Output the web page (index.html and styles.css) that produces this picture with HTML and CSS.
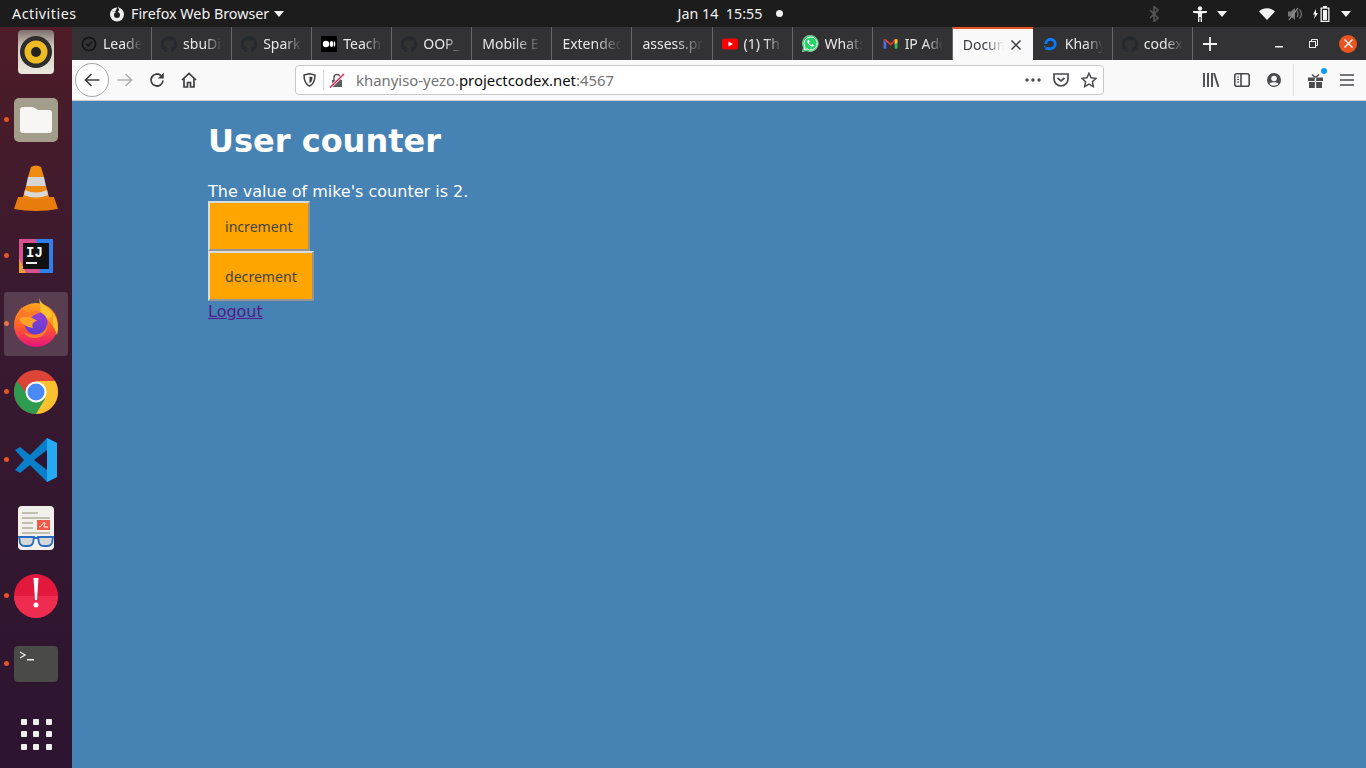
FILE: index.html
```html
<!DOCTYPE html>
<html lang="en">
<head>
    <meta charset="UTF-8">
    <title>User counter</title>
    <link rel="stylesheet" href="styles.css">
</head>
<body>
    <svg class="defs" width="0" height="0">
        <symbol id="github" viewBox="0 0 24 24"><path d="M12 .5C5.37.5 0 5.87 0 12.5c0 5.3 3.44 9.8 8.2 11.39.6.11.82-.26.82-.58v-2.03c-3.34.73-4.04-1.61-4.04-1.61-.55-1.39-1.33-1.76-1.33-1.76-1.09-.74.08-.73.08-.73 1.2.08 1.84 1.24 1.84 1.24 1.07 1.83 2.81 1.3 3.5 1 .11-.78.42-1.3.76-1.6-2.67-.3-5.47-1.33-5.47-5.93 0-1.31.47-2.38 1.24-3.22-.13-.3-.54-1.52.12-3.18 0 0 1-.32 3.3 1.23a11.5 11.5 0 016 0c2.3-1.55 3.3-1.23 3.3-1.23.66 1.66.25 2.88.12 3.18.77.84 1.24 1.91 1.24 3.22 0 4.61-2.8 5.63-5.48 5.92.43.37.81 1.1.81 2.22v3.29c0 .32.22.7.83.58A12 12 0 0024 12.5C24 5.87 18.63.5 12 .5z" fill="#24292e"/></symbol>
        <symbol id="caret" viewBox="0 0 10 6"><path d="M0 0h10L5 6z" fill="#f2f2f2"/></symbol>
    </svg>

    <!-- Ubuntu top bar -->
    <div class="topbar">
        <div class="top-left">
            <span class="activities">Activities</span>
            <span class="app-menu">
                <svg width="16" height="16" viewBox="0 0 16 16"><circle cx="8" cy="8.500" r="7" fill="#eee"/><circle cx="8" cy="9" r="3" fill="#1d1d1d"/><path d="M1 4l5 2 3-6 2 2-2 4H5z" fill="#1d1d1d"/><path d="M9 0c1 2 3 2 5 5l-4-1z" fill="#eee"/></svg>
                <span>Firefox Web Browser</span>
                <svg class="caret" width="10" height="6"><use href="#caret"/></svg>
            </span>
        </div>
        <div class="clock">
            <span>Jan 14&nbsp; 15:55</span>
            <span class="clock-dot"></span>
        </div>
        <div class="tray">
            <svg class="tray-bt" width="10" height="16" viewBox="0 0 10 16"><path d="M1 4l8 8-4 3.500V.5l4 3.500-8 8" fill="none" stroke="#555" stroke-width="1.600"/></svg>
            <svg class="tray-person" width="14" height="16" viewBox="0 0 14 16"><circle cx="7" cy="2.500" r="2.200" fill="#f2f2f2"/><path d="M0 5h14v1.800L9 7.500V16H7.600v-5H6.400v5H5V7.500L0 6.800z" fill="#f2f2f2"/></svg>
            <svg class="tray-caret" width="10" height="6"><use href="#caret"/></svg>
            <svg class="tray-wifi" width="16" height="12" viewBox="0 0 16 12"><path d="M0 3.500C4-.8 12-.8 16 3.500L8 12z" fill="#f2f2f2"/></svg>
            <svg class="tray-vol" width="16" height="14" viewBox="0 0 16 14"><path d="M0 4.500h3L7 1v12L3 9.500H0z" fill="#777"/><path d="M9 4c1.500 1.500 1.500 4.500 0 6M11.500 2.500c2.500 2.500 2.500 6.500 0 9" fill="none" stroke="#777" stroke-width="1.200"/><path d="M1 13L10 1" stroke="#999" stroke-width="1.200"/></svg>
            <svg class="tray-batt" width="18" height="16" viewBox="0 0 18 16"><path d="M3 3L0 8.500h2L1 13l4-6H3z" fill="#f2f2f2"/><path d="M10 0h4v1.500h2.500V16h-9V1.500H10z" fill="#f2f2f2"/><rect x="8.800" y="2.700" width="6.400" height="12" fill="#1d1d1d"/><rect x="10" y="4" width="4" height="10" fill="#f2f2f2"/></svg>
            <svg class="tray-caret" width="10" height="6"><use href="#caret"/></svg>
        </div>
    </div>

    <div class="desktop">
        <!-- Dock -->
        <nav class="dock">
            <div class="dock-item">
                <svg width="64" height="64" viewBox="0 0 64 64">
                    <defs>
                        <linearGradient id="rb" x1="0" y1="0" x2="0" y2="1"><stop offset="0" stop-color="#7d6f6c"/><stop offset=".4" stop-color="#d6d1c5"/><stop offset="1" stop-color="#ebe8dd"/></linearGradient>
                    </defs>
                    <rect x="14" y="10" width="36" height="44" rx="4" fill="url(#rb)"/>
                    <circle cx="32" cy="32" r="16" fill="#2f2c2e"/>
                    <circle cx="32" cy="32" r="11.500" fill="#edbb22"/>
                    <circle cx="32" cy="32" r="5" fill="#222"/>
                </svg>
            </div>
            <div class="dock-item running">
                <svg width="64" height="64" viewBox="0 0 64 64">
                    <rect x="10" y="10" width="44" height="44" rx="5" fill="#a39d8b"/>
                    <path d="M16 22q0-3 3-3h10l5 3h11q3 0 3 3v17q0 3-3 3H19q-3 0-3-3z" fill="#f7f6f4"/>
                </svg>
            </div>
            <div class="dock-item">
                <svg width="64" height="64" viewBox="0 0 64 64">
                    <path d="M14 41h36l4 12q-22 4-44 0z" fill="#e87d0d"/>
                    <path d="M27 11q5-3 10 0l3 10H24z" fill="#f08b12"/>
                    <path d="M24 21h16l2 9H22z" fill="#d5d5d5"/>
                    <path d="M22 30h20l3 11q-13 5-26 0z" fill="#f08b12"/>
                    <path d="M21 34q11 5 22 0l1 5q-12 5-24 0z" fill="#d8d8d8"/>
                </svg>
            </div>
            <div class="dock-item running">
                <svg width="64" height="64" viewBox="0 0 64 64">
                    <path d="M15 15h34v34H15z" fill="#d9508f"/>
                    <path d="M32 15h17v34H36z" fill="#2f80ed"/>
                    <path d="M15 34l7 15H15z" fill="#f09a3e"/>
                    <rect x="19" y="19" width="26" height="26" fill="#111"/>
                    <text class="ij-text" x="22" y="33">IJ</text>
                    <rect x="22" y="38" width="11" height="2" fill="#eee"/>
                </svg>
            </div>
            <div class="dock-item running active">
                <svg width="64" height="64" viewBox="0 0 64 64">
                    <defs>
                        <linearGradient id="fx" x1="0" y1="0" x2="0" y2="1"><stop offset="0" stop-color="#ffa51f"/><stop offset=".55" stop-color="#ff5a2a"/><stop offset="1" stop-color="#e5127f"/></linearGradient>
                        <linearGradient id="fxglobe" x1="0" y1="0" x2="0" y2="1"><stop offset="0" stop-color="#9a3fd0"/><stop offset="1" stop-color="#5b3bd6"/></linearGradient>
                    </defs>
                    <circle cx="32" cy="33" r="22" fill="url(#fx)"/>
                    <path d="M35 6c2 7 9 8 14 15 5 6 6 15 4 22-3-10-9-17-17-21 1-5 0-10-1-16z" fill="#ffc22a"/>
                    <path d="M49 21c-2 5-3 6-6 5l6 8z" fill="#ff9a24"/>
                    <circle cx="32" cy="31" r="11.500" fill="url(#fxglobe)"/>
                    <path d="M18 15c1 4 4 6 8 5 3-1 8-1 11 1-4 0-8 2-10 5l-6 2-8-2c0-4 2-8 5-11z" fill="#ff7a24"/>
                    <path d="M15 27c5-3 13-3 18 2-3 0-6 3-4 7-6-1-12-4-14-9z" fill="#ffa328"/>
                    <path d="M43 31c2 8-4 15-12 15-5 0-9-2-11-6 5 3 12 4 17 1 4-2 6-6 6-10z" fill="#ff7d2a"/>
                </svg>
            </div>
            <div class="dock-item running">
                <svg width="64" height="64" viewBox="0 0 64 64">
                    <circle cx="32" cy="32" r="22" fill="#db4437"/>
                    <path d="M32 54A22 22 0 0 0 51 21H32z" fill="#fbc02d"/>
                    <path d="M13 21A22 22 0 0 0 32 54l9-15-9-7-9 2z" fill="#2e9b4f"/>
                    <circle cx="32" cy="32" r="10.500" fill="#fff"/>
                    <circle cx="32" cy="32" r="8.500" fill="#4a8af4"/>
                </svg>
            </div>
            <div class="dock-item running">
                <svg width="64" height="64" viewBox="0 0 64 64">
                    <path d="M43 10l10 5v34l-10 5-17-17-10 8-5-3 9-10-9-10 5-3 10 8z" fill="#0a7fc9"/>
                    <path d="M43 10l10 5v34l-10 5z" fill="#25a9f2"/>
                    <path d="M43 22L30 32l13 10z" fill="#2d1531"/>
                </svg>
            </div>
            <div class="dock-item">
                <svg width="64" height="64" viewBox="0 0 64 64">
                    <rect x="14" y="10" width="36" height="44" rx="4" fill="#f2f0ea"/>
                    <path d="M18 17h16M18 22h28M18 27h11M18 32h11M18 37h28" stroke="#b3ae9f" stroke-width="1.500"/>
                    <rect x="33" y="24" width="13" height="10" fill="#ee5a4a"/>
                    <path d="M35 31c3 0 3-5 6-4 1 1-3 4 0 4h3" fill="none" stroke="#fff"/>
                    <path d="M15 41h15l-1 6q-1 3-5 3h-3q-4 0-5-3zM34 41h15l-1 6q-1 3-5 3h-3q-4 0-5-3z" fill="#d6d9d8" stroke="#2a6dbe" stroke-width="1.800"/>
                    <path d="M29 42h6" stroke="#2a6dbe" stroke-width="2"/>
                </svg>
            </div>
            <div class="dock-item running">
                <svg width="64" height="64" viewBox="0 0 64 64">
                    <circle cx="32" cy="32" r="22" fill="#e2183c"/>
                    <path d="M10 32a22 22 0 0 0 44 0z" fill="#ee2c50"/>
                    <path d="M29.500 14h5l-1.500 22h-2z" fill="#fff"/>
                    <circle cx="32" cy="41" r="2.500" fill="#fff"/>
                </svg>
            </div>
            <div class="dock-item running">
                <svg width="64" height="64" viewBox="0 0 64 64">
                    <rect x="10" y="14" width="44" height="36" rx="4" fill="#4a4a48"/>
                    <path d="M16 20l5 3-5 3" fill="none" stroke="#eee" stroke-width="1.300"/>
                    <rect x="23" y="27" width="7" height="1.500" fill="#eee"/>
                </svg>
            </div>
            <div class="dock-item">
                <div class="app-grid">
                    <i></i><i></i><i></i><i></i><i></i><i></i><i></i><i></i><i></i>
                </div>
            </div>
        </nav>

        <div class="window">
            <!-- Tabs -->
            <div class="tabbar">
                <div class="tab">
                    <svg width="16" height="16" viewBox="0 0 17 17"><circle cx="8.500" cy="8.500" r="7" fill="none" stroke="#111" stroke-width="1.600"/><path d="M5.500 8.500l2.500 2 3.500-4.500" fill="none" stroke="#111" stroke-width="1.400"/></svg>
                    <span class="tab-label">Leade</span>
                </div>
                <div class="tab"><svg width="16" height="16"><use href="#github"/></svg><span class="tab-label">sbuDi</span></div>
                <div class="tab"><svg width="16" height="16"><use href="#github"/></svg><span class="tab-label">Spark</span></div>
                <div class="tab">
                    <svg width="16" height="16" viewBox="0 0 16 16"><rect width="16" height="16" fill="#000"/><circle cx="5" cy="8" r="3.200" fill="#fff"/><ellipse cx="10.500" cy="8" rx="1.700" ry="3" fill="#fff"/><ellipse cx="13.500" cy="8" rx=".8" ry="2.700" fill="#fff"/></svg>
                    <span class="tab-label">Teach</span>
                </div>
                <div class="tab"><svg width="16" height="16"><use href="#github"/></svg><span class="tab-label">OOP_</span></div>
                <div class="tab"><span class="tab-label">Mobile E</span></div>
                <div class="tab"><span class="tab-label">Extended</span></div>
                <div class="tab"><span class="tab-label">assess.pr</span></div>
                <div class="tab">
                    <svg width="16" height="16" viewBox="0 0 16 16"><rect y="2.500" width="16" height="11" rx="3" fill="#f00"/><path d="M6.500 5.500L11 8l-4.500 2.500z" fill="#fff"/></svg>
                    <span class="tab-label">(1) Th</span>
                </div>
                <div class="tab">
                    <svg width="17" height="17" viewBox="0 0 17 17"><path d="M8.500.2a8.200 8.200 0 0 0-7 12.500L.2 16.800l4.200-1.100A8.200 8.200 0 1 0 8.500.2z" fill="#25d366" stroke="#fff" stroke-width=".4"/><path d="M8.500 2a6.500 6.500 0 0 0-5.500 10l-.7 2.500 2.600-.7A6.500 6.500 0 1 0 8.500 2z" fill="none" stroke="#fff" stroke-width="1"/><path d="M6 5c-1 1-.8 2.300.3 3.800s2.800 2.800 4 2.700c1 0 1.700-.8 1.500-1.500l-1.700-.9-.8.800c-1-.4-2-1.500-2.300-2.400l.7-.8L7 5z" fill="#fff"/></svg>
                    <span class="tab-label">Whats</span>
                </div>
                <div class="tab">
                    <svg width="17" height="16" viewBox="0 0 15 15"><path d="M1 3v9h2.500V6z" fill="#4a6fe0"/><path d="M14 3v9h-2.500V6z" fill="#3cb55c"/><path d="M1 3l2.500 0L7.500 7l4-4H14l-6.500 6z" fill="#e8402f"/><path d="M11.500 3H14v3l-2.500 2z" fill="#f7c52c"/></svg>
                    <span class="tab-label">IP Adc</span>
                </div>
                <div class="tab tab-active">
                    <span class="tab-label">Docum</span>
                    <svg class="tab-close" width="12" height="12" viewBox="0 0 12 12"><path d="M1.500 1.500l9 9M10.500 1.500l-9 9" stroke="#3b3b3f" stroke-width="1.500"/></svg>
                </div>
                <div class="tab">
                    <svg width="17" height="18" viewBox="0 0 18 18"><path d="M9 15.500V12.500A3.500 3.500 0 1 0 5.500 9H2.500A6.500 6.500 0 1 1 9 15.500z" fill="#0a7cff"/><path d="M6 12.500h3v3H6zM3.500 12.500H6V15H3.500zM2 11h1.500v1.500H2z" fill="#0a7cff"/></svg>
                    <span class="tab-label">Khany</span>
                </div>
                <div class="tab"><svg width="16" height="16"><use href="#github"/></svg><span class="tab-label">codex</span></div>
                <div class="tab-new">
                    <svg width="14" height="14" viewBox="0 0 14 14"><path d="M7 0v14M0 7h14" stroke="#f2f2f2" stroke-width="1.800"/></svg>
                </div>
                <div class="window-controls">
                    <svg class="win-min" width="8" height="2"><rect width="8" height="1.500" fill="#eee"/></svg>
                    <svg class="win-max" width="9" height="9" viewBox="0 0 9 9"><path d="M2.500 2.500V.5h6v6h-2" fill="none" stroke="#eee"/><rect x=".5" y="2.500" width="6" height="6" fill="none" stroke="#eee"/></svg>
                    <span class="win-close">
                        <svg width="9" height="9" viewBox="0 0 9 9"><path d="M.5.500l8 8M8.500.500l-8 8" stroke="#fff" stroke-width="1.300"/></svg>
                    </span>
                </div>
            </div>

            <!-- Toolbar -->
            <div class="toolbar">
                <div class="nav-buttons">
                    <span class="back-btn">
                        <svg width="16" height="14" viewBox="0 0 16 14"><path d="M15.500 7H1.500M7.500 1l-6 6 6 6" fill="none" stroke="#3f3f41" stroke-width="1.700"/></svg>
                    </span>
                    <svg class="forward" width="16" height="14" viewBox="0 0 16 14"><path d="M.5 7h14M8.500 1l6 6-6 6" fill="none" stroke="#b1b1b3" stroke-width="1.700"/></svg>
                    <svg class="reload" width="16" height="16" viewBox="0 0 16 16"><path d="M14 8.500A6 6 0 1 1 12 3.500" fill="none" stroke="#3f3f41" stroke-width="1.800"/><path d="M14.800.5v6h-6z" fill="#3f3f41"/></svg>
                    <svg class="home" width="16" height="16" viewBox="0 0 16 16"><path d="M1 8l7-6.500L15 8M3 6.500V15h3.500v-4.500h3V15H13V6.500" fill="none" stroke="#3f3f41" stroke-width="1.700"/></svg>
                </div>
                <div class="urlbar">
                    <svg class="url-shield" width="13" height="14" viewBox="0 0 13 14"><path d="M1 2l5.500-1.200L12 2c0 5-1 9-5.500 11.200C2 11 1 7 1 2z" fill="none" stroke="#3f3f41" stroke-width="1.500"/><path d="M6.500 3.500L9.500 4c0 3-.7 5-3 6.500z" fill="#3f3f41"/></svg>
                    <span class="url-sep"></span>
                    <svg class="url-lock" width="16" height="15" viewBox="0 0 16 15"><path d="M3 7h10v7H3z" fill="#5c5c5f"/><path d="M5 7V4.500a3 3 0 0 1 6 0V7" fill="none" stroke="#5c5c5f" stroke-width="1.500"/><path d="M1 14.500L15 1" stroke="#f9f9fa" stroke-width="3"/><path d="M1 14.500L15 1" stroke="#e22850" stroke-width="1.500"/></svg>
                    <span class="url-text">khanyiso-yezo.<b>projectcodex.net</b>:4567</span>
                    <svg class="url-dots" width="16" height="4" viewBox="0 0 16 4"><circle cx="2" cy="2" r="1.700" fill="#4a4a4f"/><circle cx="8" cy="2" r="1.700" fill="#4a4a4f"/><circle cx="14" cy="2" r="1.700" fill="#4a4a4f"/></svg>
                    <svg class="url-pocket" width="16" height="14" viewBox="0 0 16 14"><path d="M1 1h14v5a7 7 0 0 1-14 0z" fill="none" stroke="#4a4a4f" stroke-width="1.700"/><path d="M4.500 5l3.500 3 3.500-3" fill="none" stroke="#4a4a4f" stroke-width="1.700"/></svg>
                    <svg class="url-star" width="16" height="16" viewBox="0 0 16 16"><path d="M8 1.200l2.100 4.500 4.900.6-3.600 3.400.9 4.900L8 12.200l-4.300 2.400.9-4.900L1 6.300l4.900-.6z" fill="none" stroke="#4a4a4f" stroke-width="1.500"/></svg>
                </div>
                <div class="tools">
                    <svg width="16" height="14" viewBox="0 0 16 14"><path d="M1 0v14M5 0v14M9 0v14M11 0l4.500 14" stroke="#4a4a4f" stroke-width="1.900" fill="none"/></svg>
                    <svg class="tool-sidebar" width="16" height="14" viewBox="0 0 16 14"><rect x=".8" y=".8" width="14.400" height="12.400" rx="2" fill="none" stroke="#4a4a4f" stroke-width="1.600"/><path d="M7 1v12" stroke="#4a4a4f" stroke-width="1.600"/><path d="M3 4h2M3 6.500h2M3 9h2" stroke="#4a4a4f"/></svg>
                    <svg width="14" height="14" viewBox="0 0 14 14"><circle cx="7" cy="7" r="7" fill="#4a4a4f"/><circle cx="7" cy="5.500" r="2.800" fill="#f9f9fa"/><path d="M2.500 11c1-2.500 8-2.500 9 0-2 2.200-7 2.200-9 0z" fill="#f9f9fa"/></svg>
                    <span class="tools-sep"></span>
                    <span class="gift">
                        <svg width="15" height="15" viewBox="0 0 15 15"><path d="M0 4.500h6.800V8H0zM8.200 4.500H15V8H8.200zM1 9h5.800v6H1zM8.200 9H14v6H8.200z" fill="#4a4a4f"/><path d="M7.500 4.500L4 1.500M7.500 4.500l3.500-3" stroke="#4a4a4f" stroke-width="1.500"/></svg>
                        <span class="gift-badge"></span>
                    </span>
                    <svg width="14" height="12" viewBox="0 0 14 12"><path d="M0 1h14M0 6h14M0 11h14" stroke="#4a4a4f" stroke-width="1.700"/></svg>
                </div>
            </div>

            <!-- Page -->
            <main class="page">
                <h1>User counter</h1>
                <p class="counter-text">The value of mike's counter is 2.</p>
                <button class="counter-btn">increment</button>
                <button class="counter-btn">decrement</button>
                <a class="logout" href="#">Logout</a>
            </main>
        </div>
    </div>
</body>
</html>
```

FILE: styles.css
```css
* {
    box-sizing: border-box;
}
html, body {
    height: 100%;
}
body {
    margin: 0;
    overflow: hidden;
    display: flex;
    flex-direction: column;
    font-family: "Noto Sans", sans-serif;
    background-color: #4682b4;
}
svg {
    display: block;
    flex: none;
}
.defs {
    position: absolute;
}

/* top bar */
.topbar {
    height: 27px;
    flex: none;
    display: grid;
    grid-template-columns: 1fr auto 1fr;
    align-items: center;
    background-color: #1c1c1c;
    color: #f2f2f2;
    font-size: 14.3px;
}
.top-left {
    display: flex;
    align-items: center;
    padding-left: 12px;
}
.activities {
    width: 97px;
    letter-spacing: 0.5px;
}
.app-menu {
    display: flex;
    align-items: center;
    gap: 6px;
}
.app-menu .caret {
    margin-left: -1px;
}
.clock {
    display: flex;
    align-items: center;
    gap: 14px;
    margin-left: 95px;
}
.clock-dot {
    width: 7px;
    height: 7px;
    border-radius: 50%;
    background-color: #f2f2f2;
}
.tray {
    display: flex;
    align-items: center;
    justify-content: flex-end;
    padding-right: 15px;
}
.tray-bt {
    margin-right: 34px;
}
.tray-person {
    margin-right: 1px;
}
.tray-caret {
    margin-left: 9px;
}
.tray-wifi {
    margin-left: 32px;
}
.tray-vol {
    margin-left: 13px;
}
.tray-batt {
    margin-left: 9px;
}
.tray-batt + .tray-caret {
    margin-left: 10px;
}

.desktop {
    flex: 1;
    display: flex;
    min-height: 0;
}

/* dock */
.dock {
    width: 72px;
    flex: none;
    overflow: hidden;
    background: linear-gradient(180deg, #4e1c27 0%, #3a1a2f 35%, #2c1430 100%);
}
.dock-item {
    position: relative;
    height: 68px;
    display: flex;
    align-items: center;
    justify-content: center;
}
.dock-item:first-child {
    margin-top: -9px;
}
.dock-item svg {
    position: relative;
    z-index: 1;
}
.running::before {
    content: "";
    position: absolute;
    left: 4px;
    top: 31px;
    width: 5px;
    height: 5px;
    border-radius: 50%;
    background-color: #e95420;
}
.active::after {
    content: "";
    position: absolute;
    left: 4px;
    top: 2px;
    width: 64px;
    height: 64px;
    border-radius: 3px;
    background-color: rgba(255, 255, 255, 0.16);
}
.ij-text {
    font-family: "Liberation Mono", monospace;
    font-size: 14px;
    font-weight: bold;
    fill: #fff;
}
.app-grid {
    display: grid;
    grid-template-columns: repeat(3, 6px);
    gap: 6.500px;
    margin-top: 4px;
}
.app-grid i {
    height: 6px;
    border-radius: 1px;
    background-color: #eeeeec;
}

/* browser */
.window {
    flex: 1;
    min-width: 0;
    display: flex;
    flex-direction: column;
}
.tabbar {
    height: 33px;
    flex: none;
    display: flex;
    background-color: #323234;
    color: #e8e8e8;
    font-size: 14px;
}
.tab {
    width: 80.07px;
    flex: none;
    display: flex;
    align-items: center;
    gap: 6px;
    padding: 0 9px;
    border-right: 1px solid #67676a;
}
.tab-label {
    flex: 1;
    min-width: 0;
    overflow: hidden;
    white-space: nowrap;
    -webkit-mask-image: linear-gradient(90deg, #000 55%, transparent 100%);
    mask-image: linear-gradient(90deg, #000 55%, transparent 100%);
}
.tab > .tab-label:first-child {
    margin-left: 1px;
}
.tab-active {
    background-color: #f9f9fa;
    color: #3b3b3f;
    border-top: 2px solid #e95420;
    border-right: none;
}
.tab-close {
    margin-right: 2px;
}
.tab-new {
    width: 34px;
    display: flex;
    align-items: center;
    justify-content: center;
}
.window-controls {
    flex: 1;
    display: flex;
    align-items: center;
    justify-content: flex-end;
    padding-right: 9px;
}
.win-min {
    margin-top: 6px;
}
.win-max {
    margin-left: 26px;
}
.win-close {
    width: 18px;
    height: 18px;
    margin-left: 21px;
    display: flex;
    align-items: center;
    justify-content: center;
    border-radius: 50%;
    background-color: #e95420;
}
.toolbar {
    height: 41px;
    flex: none;
    display: flex;
    align-items: center;
    padding-left: 3px;
    background-color: #f9f9fa;
    border-bottom: 1px solid #cfcfd0;
}
.nav-buttons {
    width: 220px;
    flex: none;
    display: flex;
    align-items: center;
}
.back-btn {
    width: 34px;
    height: 34px;
    display: flex;
    align-items: center;
    justify-content: center;
    border: 1px solid #a5a5a7;
    border-radius: 50%;
    background-color: #fff;
}
.forward {
    margin-left: 8px;
}
.reload {
    margin-left: 16px;
}
.home {
    margin-left: 16px;
}
.urlbar {
    width: 809px;
    height: 30px;
    flex: none;
    display: flex;
    align-items: center;
    padding: 0 6px 0 7px;
    background-color: #fff;
    border: 1px solid #c8c8ca;
    border-radius: 4px;
    font-size: 14.900px;
    color: #737373;
}
.url-sep {
    width: 1px;
    height: 20px;
    margin-left: 7px;
    background-color: #d7d7db;
}
.url-lock {
    margin-left: 5px;
}
.url-text {
    flex: 1;
    margin-left: 11px;
}
.url-text b {
    font-weight: normal;
    color: #0c0c0d;
}
.url-pocket {
    margin-left: 12px;
}
.url-star {
    margin-left: 12px;
}
.tools {
    flex: 1;
    display: flex;
    align-items: center;
    gap: 16px;
    padding-left: 99px;
}
.tool-sidebar {
    margin-left: -1px;
    margin-right: 1px;
}
.tools-sep {
    width: 1px;
    height: 32px;
    margin-left: -4px;
    margin-right: -2px;
    background-color: #dcdcde;
}
.gift {
    position: relative;
    margin-right: 1px;
}
.gift-badge {
    position: absolute;
    top: -5px;
    right: -4px;
    width: 6px;
    height: 6px;
    border-radius: 50%;
    background-color: #0a9dff;
}

/* page */
.page {
    flex: 1;
    padding-left: 136px;
    background-color: steelblue;
    color: #fff;
    font-family: "DejaVu Sans", sans-serif;
    font-size: 16px;
}
.page h1 {
    margin: 22px 0;
    font-size: 32px;
    line-height: 37px;
}
.counter-text {
    margin: 0;
    line-height: 19px;
}
.counter-btn {
    display: block;
    height: 50px;
    padding: 0 15px;
    background-color: orange;
    border: 2px solid;
    border-color: #dcdcdc #959595 #959595 #dcdcdc;
    color: #444;
    font-family: "Noto Sans", sans-serif;
    font-size: 14.100px;
}
.logout {
    display: block;
    color: #551a8b;
    line-height: 21px;
}
```
